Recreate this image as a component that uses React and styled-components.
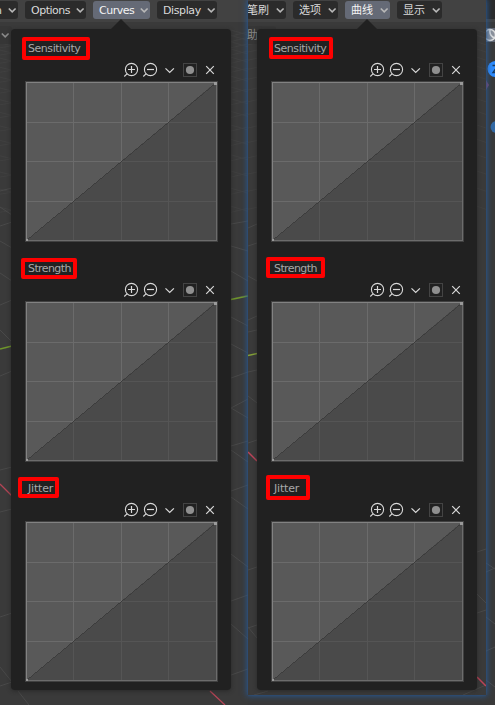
import React from "react";
import styled, { createGlobalStyle } from "styled-components";

const Global = createGlobalStyle`
  *{box-sizing:border-box}
  html,body{margin:0;background:#383838;overflow:hidden}
  body{font-family:"DejaVu Sans","Noto Sans CJK SC",sans-serif;font-size:11px;color:#dedede}
`;
const Screen = styled.main`
  position:relative;width:495px;height:705px;overflow:hidden;
  display:grid;grid-template-columns:248px 238px 9px;background:#393939;
`;
const Pane = styled.section`
  position:relative;height:${p => p.$h}px;min-width:0;
  background:#3a3a3a;
  z-index:${p => (p.$lifted ? 1 : 0)};
  box-shadow:${p => (p.$lifted ? "0 0 1px #2d5c98, 0 0 6px 1px #28578f" : "none")};
`;
const Scene = styled.svg`
  position:absolute;left:0;top:0;width:100%;height:100%;
`;
const Header = styled.header`
  position:relative;height:22px;background:#424242;display:flex;gap:7px;
  padding-top:1px;overflow:hidden;
`;
const MenuButton = styled.button`
  flex:none;width:${p => p.$w}px;height:18px;border:0;border-radius:3px;
  margin-left:${p => (p.$shift ? -p.$shift : 0)}px;
  padding:0 0 0 ${p => p.$pad}px;display:flex;align-items:center;justify-content:space-between;
  background:${p => (p.$on ? "#656a76" : "#2b2b2b")};color:${p => (p.$on ? "#f4f4f4" : "#dadada")};
  font-family:inherit;font-size:11px;line-height:16px;white-space:nowrap;
  letter-spacing:${p => (p.$cjk ? 0 : p.$track)}px;
  span{padding-top:${p => (p.$cjk ? 2 : 1)}px}
`;
const SubMenu = styled.div`
  position:absolute;left:0;top:26px;width:${p => p.$w}px;height:18px;
  display:flex;align-items:center;border-radius:0 3px 3px 0;
  background:#363636;color:#8a8a8a;font-size:11px;line-height:18px;
  span{padding-top:2px;margin-left:-1px}
`;
const Popover = styled.div`
  position:relative;width:220px;height:661px;margin:7px 0 0 ${p => p.$left}px;
  padding:9px 14px 0 15px;border-radius:4px;background:#212121;
  box-shadow:0 1px 4px #202020aa;
`;
const Pointer = styled.svg`
  position:absolute;left:${p => p.$x}px;top:-10px;width:20px;height:10px;
`;
const CurveBlock = styled.div`height:220px;`;
const LabelRow = styled.div`height:21px;`;
const Label = styled.span`
  display:block;position:relative;width:max-content;padding:1px 0 0 2px;height:21px;
  line-height:20px;color:#a8a8a8;letter-spacing:${p => p.$track}px;
`;
const Marker = styled.span`
  position:absolute;border:4px solid #fe0000;border-radius:2px;
  left:${p => p.$box[0]}px;top:${p => p.$box[1]}px;
  width:${p => p.$box[2]}px;height:${p => p.$box[3]}px;
`;
const Tools = styled.div`
  height:23px;display:flex;justify-content:flex-end;padding:3px 0 0;
  svg{display:block;flex:none}
`;
const Chart = styled.svg`display:block;width:191px;height:159px;overflow:visible;`;
const Tail = styled.aside`position:relative;height:705px;`;

const Chevron = ({ color = "#b8b8b8" }) => (
  <svg width="11" height="10" viewBox="0 0 11 10">
    <path d="M1.8 3.5 5.2 6.9 8.6 3.5" fill="none" stroke={color} strokeWidth="1.6" />
  </svg>
);

const ToolIcons = () => (
  <Tools>
    <svg width="96" height="18" viewBox="0 0 96 18" fill="none" stroke="#d8d8d8" strokeWidth="1.1">
      {[10.5, 29.5].map((x, i) => (
        <g key={x}>
          <circle cx={x} cy="7.5" r="6.1" />
          <path d={`M${x - 4.3} 11.6 l-2.9 2.9`} />
          <path d={`M${x - 3.5} 7.5h7${i ? "" : `M${x} 4v7`}`} strokeWidth="1.2" />
        </g>
      ))}
      <path d="M44.5 6.3 48.7 10.5 52.9 6.3" strokeWidth="1.2" />
      <rect x="62.5" y="1.5" width="13" height="13" stroke="#444" strokeWidth="1" />
      <circle cx="69" cy="8" r="4.1" fill="#8f8f8f" stroke="none" />
      <path d="M85.2 4.2l7.6 7.6M92.8 4.2l-7.6 7.6" strokeWidth="1.2" />
    </svg>
  </Tools>
);

const CurveChart = () => (
  <Chart viewBox="0 0 191 159" shapeRendering="crispEdges">
    <path d="M0 0H191V159H0Z" fill="#4a4a4a" />
    <path d="M0 0H190L1 158Z" fill="#595959" />
    <path d="M47.5 1V119M95.5 1V79M142.5 1V40M1 40.5H142M1 79.5H95M1 119.5H47" stroke="#6b6b6b" />
    <path d="M47.5 120V158M95.5 80V158M142.5 41V158M143 40.5H190M96 79.5H190M48 119.5H190" stroke="#555" />
    <path d="M1 158 190 1" stroke="#3b3b3b" strokeWidth="0.9" />
    <path d="M-.5 -.5H191.5V159.5H-.5Z" fill="none" stroke="#414141" />
    <path d="M0 158.5H191M190.5 0V159" stroke="#6c6c6c" />
    <path d="M0 .5H191M.5 0V159" stroke="#828282" />
    <path d="M188 0h3v3h-3zM0 157h2v2H0z" fill="#9a9a9a" />
  </Chart>
);

const CurvePopover = ({ left, pointer, boxes }) => (
  <Popover $left={left}>
    <Pointer $x={pointer} viewBox="0 0 20 10"><path d="M0 10 10 0 20 10Z" fill="#212121" /></Pointer>
    {[["Sensitivity", -0.45], ["Strength", -0.6], ["Jitter", -0.2]].map(([name, track], i) => (
      <CurveBlock key={name}>
        <LabelRow><Label $track={track}>{name}<Marker $box={boxes[i]} /></Label></LabelRow>
        <ToolIcons />
        <CurveChart />
      </CurveBlock>
    ))}
  </Popover>
);

const Menu = ({ label, w, pad = 6, on, cjk, shift, track = -0.5 }) => (
  <MenuButton $w={w} $pad={pad} $on={on} $cjk={cjk} $track={track} $shift={shift}>
    <span>{label}</span><Chevron />
  </MenuButton>
);

const TOP_STREAKS = Array.from({ length: 16 }, (_, i) => 30 + i * (5 + i * 0.45));

const LeftScene = () => (
  <Scene viewBox="0 0 248 705" fill="none" stroke="#494949">
    {TOP_STREAKS.map(y => <path key={y} d={`M0 ${y + 1}L12 ${y + 4}M231 ${y}L248 ${y + 5}M0 ${y + 6}L12 ${y + 4}M231 ${y + 6}L248 ${y + 2}`} stroke="#404040" />)}
    <path d="M0 191 12 188M0 207 12 215M0 226 12 222M0 241 12 248M0 273 12 281M0 305 12 300M0 330 12 342M0 376 12 371M0 470 12 467M0 512 12 509M0 617 12 613M0 667 12 682M0 686 12 682M18 691 29 705" />
    <path d="M231 224 248 221M231 246 248 251M231 271 248 281M231 299 248 295M231 317 248 326M231 344 248 353M231 378 248 372M231 408 248 418M231 408 248 399M231 450 248 462M231 446 248 441M231 497 248 509M231 491 248 485M231 554 248 567M231 601 248 595M231 624 248 639M231 675 248 669" />
    <path d="M0 349 12 346M231 299.5 248 296" stroke="#6f962b" strokeWidth="1.3" />
    <path d="M0 484 12 496M210 691 225 705" stroke="#b34455" strokeWidth="1.3" />
  </Scene>
);

const RightScene = () => (
  <Scene viewBox="0 0 238 695" fill="none" stroke="#484848">
    {TOP_STREAKS.map(y => <path key={y} d={`M0 ${y + 3}L9 ${y + 1}M229 ${y}L238 ${y + 3}`} stroke="#404040" />)}
    <path d="M0 228 9 224M0 246 9 243M0 276 9 281M0 320 9 316M0 332 9 330M0 372 9 370M0 396 9 403M0 443 9 440M0 570 9 567M0 627 9 638M0 628 9 625M6 695 20 691" />
    <path d="M229 552 238 549M229 594 238 603M229 613 238 610M215 695 238 685" />
    <path d="M0 355.5 9 353.5" stroke="#829f38" strokeWidth="1.4" />
    <path d="M0 452 9 461M229 677 238 686" stroke="#ba4358" strokeWidth="1.5" />
  </Scene>
);

export default function App() {
  return (
    <>
      <Global />
      <Screen>
        <Pane $h={705}>
          <LeftScene />
          <SubMenu $w={12}><Chevron color="#8a8a8a" /></SubMenu>
          <Header>
            <Menu label="n" w={23} pad={0} track={-1} shift={5} />
            <Menu label="Options" w={61} />
            <Menu label="Curves" w={57} on />
            <Menu label="Display" w={60} track={-0.4} />
          </Header>
          <CurvePopover left={11} pointer={100} boxes={[[-4, -1, 68, 23], [-5, 0, 56, 21], [-8, -1, 41, 21]]} />
        </Pane>
        <Pane $h={695} $lifted>
          <RightScene />
          <SubMenu $w={28}><span>助</span></SubMenu>
          <Header>
            <Menu label="笔刷" w={39} pad={0} cjk shift={1} />
            <Menu label="选项" w={45} cjk />
            <Menu label="曲线" w={45} cjk on />
            <Menu label="显示" w={45} cjk />
          </Header>
          <CurvePopover left={9} pointer={100} boxes={[[-3, -1, 64, 22], [-6, -1, 59, 21], [-6, -3, 44, 25]]} />
        </Pane>
        <Tail>
          <Scene viewBox="0 0 9 705" fill="none">
            <path d="M0 0H9V19H0Z" fill="#2b2b2b" />
            <path d="M0 19H9V22H0Z" fill="#424242" />
            <path d="M0 28H9V42H0Z" fill="#656a76" />
            <circle cx="4" cy="35" r="5.5" fill="#8e939c" stroke="#dcdcdc" strokeWidth="1.5" />
            <path d="M4 30Q3 36 9 38" stroke="#e2e2e2" strokeWidth="1.5" />
            <circle cx="9.5" cy="69" r="8" fill="#2f8dff" />
            <path d="M6.5 65.5H12L7 72.5H12" stroke="#173a60" strokeWidth="1.4" />
            <path d="M0 80 3 85 0 90Z" fill="#844466" />
            <circle cx="10.5" cy="127" r="6" fill="#336aa5" />
            <path d="M0 563 9 569M0 572 9 568M0 617 9 624M0 651 9 647M0 680 9 687" stroke="#4b4b4b" />
          </Scene>
        </Tail>
      </Screen>
    </>
  );
}
